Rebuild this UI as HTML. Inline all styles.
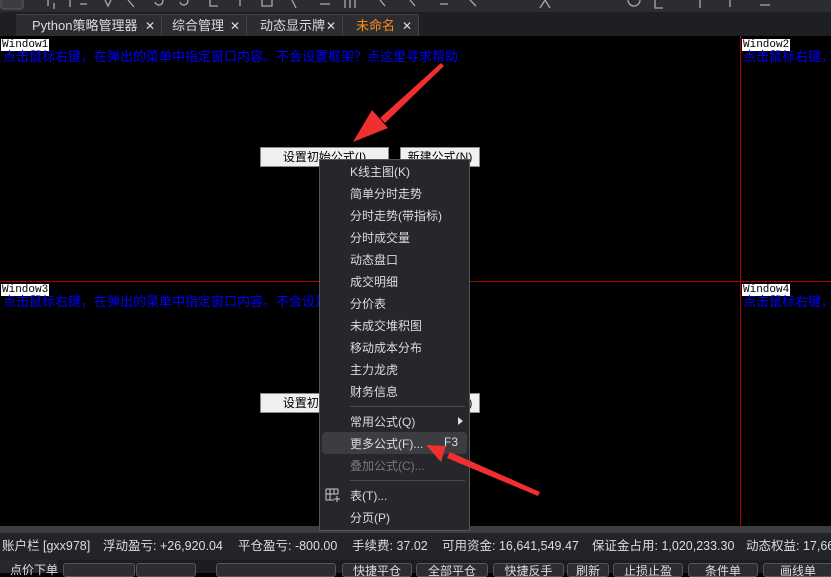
<!DOCTYPE html>
<html><head><meta charset="utf-8"><style>
*{margin:0;padding:0;box-sizing:border-box}
body{width:831px;height:573px;overflow:hidden;background:#000;font-family:"Liberation Sans","Noto Sans CJK SC",sans-serif;position:relative}
.abs{position:absolute}
.tb{left:0;top:0;width:831px;height:12px;background:#2b2d30}
.tabs{left:0;top:12px;width:831px;height:24px;background:#1e1f22}
.tab{position:absolute;top:14px;height:22px;background:#2b2d30;color:#dcdcdc;font-size:13px;line-height:22px;border-top:1px solid #444;border-right:1px solid #444}
.tab .x{position:absolute;right:6px;top:0;font-size:12px;color:#ddd}
.wl{background:#fff;color:#000;font-family:"Liberation Mono",monospace;font-size:11px;line-height:12px;padding:0 1px}
.blue{color:#0000ff;font-size:13px;line-height:14px;white-space:nowrap}
.btn{background:#f0f0f0;border:1px solid #888;color:#000;font-size:12px;line-height:18px;height:20px;text-align:center}
.menu{left:319px;top:159px;width:151px;height:372px;background:#25272b;border:1px solid #555;color:#dcdcdc;font-size:12px}
.mi{position:absolute;left:30px;white-space:nowrap}
.status{left:0;top:533px;width:831px;height:27px;background:#222427;color:#ddd;font-size:12.5px;line-height:27px;white-space:nowrap}
.bot{left:0;top:560px;width:831px;height:13px;background:#1c1d20}
.bb{position:absolute;top:3px;height:14px;background:#2b2d30;border:1px solid #555;border-radius:3px;color:#ddd;font-size:12px;line-height:14px;text-align:center;overflow:hidden}
</style></head><body>
<div class="abs tb"></div>
<svg class="abs" style="left:0;top:0" width="831" height="12"><g stroke="#aaa" fill="none" stroke-width="1.3">
<rect x="1" y="-5" width="22" height="14" rx="3" fill="#3a3c40" stroke="#555"/><path d="M48 0v6M54 3v6M70 0v7M80 4h7M105 0l3 6 3-6M128 0l6 7M155 0a4 4 0 1 1 0 2M180 0a4 4 0 1 1 0 2M210 0v6h8M240 -2v8M262 -4h10v10h-10zM292 0l4 8M320 4h10M345 0v8M350 0v8M355 0v8M380 0l5 6M410 0l5 6M440 4h8M470 0l6 6M505 0a5 5 0 0 1 10 0M540 8l5-8 5 8M628 0a6 6 0 1 0 12 0M655 0v8h8M700 0v8M720 -2h10v9M760 5h10"/></g></svg>
<div class="abs tabs"></div>
<div class="tab" style="left:16px;width:146px;padding-left:16px">Python策略管理器<span class="x">✕</span></div>
<div class="tab" style="left:162px;width:85px;padding-left:10px">综合管理<span class="x">✕</span></div>
<div class="tab" style="left:247px;width:96px;padding-left:13px">动态显示牌<span class="x">✕</span></div>
<div class="tab" style="left:343px;width:76px;padding-left:13px;color:#ff8c1a;background:#2b2d30">未命名<span class="x">✕</span></div>
<div class="abs" style="left:0;top:281px;width:831px;height:1px;background:#b00000"></div>
<div class="abs" style="left:740px;top:36px;width:1px;height:490px;background:#b00000"></div>
<div class="abs wl" style="left:1px;top:39px">Window1</div>
<div class="abs blue" style="left:3px;top:50px">点击鼠标右键，在弹出的菜单中指定窗口内容。不会设置框架？点这里寻求帮助</div>
<div class="abs wl" style="left:742px;top:39px">Window2</div>
<div class="abs blue" style="left:743px;top:50px">点击鼠标右键，</div>
<div class="abs wl" style="left:1px;top:284px">Window3</div>
<div class="abs blue" style="left:3px;top:295px">点击鼠标右键，在弹出的菜单中指定窗口内容。不会设置框架</div>
<div class="abs wl" style="left:742px;top:284px">Window4</div>
<div class="abs blue" style="left:743px;top:295px">点击鼠标右键，</div>
<div class="abs btn" style="left:260px;top:147px;width:129px">设置初始公式(I)</div>
<div class="abs btn" style="left:400px;top:147px;width:80px">新建公式(N)</div>
<div class="abs btn" style="left:260px;top:393px;width:129px">设置初始公式(I)</div>
<div class="abs btn" style="left:400px;top:393px;width:80px">新建公式(N)</div>
<div class="abs" style="left:0;top:526px;width:831px;height:7px;background:#3c3d40"></div>
<div class="abs menu">
<div class="mi" style="top:3px">K线主图(K)</div>
<div class="mi" style="top:25px">简单分时走势</div>
<div class="mi" style="top:47px">分时走势(带指标)</div>
<div class="mi" style="top:69px">分时成交量</div>
<div class="mi" style="top:91px">动态盘口</div>
<div class="mi" style="top:113px">成交明细</div>
<div class="mi" style="top:135px">分价表</div>
<div class="mi" style="top:157px">未成交堆积图</div>
<div class="mi" style="top:179px">移动成本分布</div>
<div class="mi" style="top:201px">主力龙虎</div>
<div class="mi" style="top:223px">财务信息</div>
<div style="position:absolute;left:30px;top:246px;width:115px;height:1px;background:#4a4c50"></div>
<div class="mi" style="top:253px">常用公式(Q)</div>
<div style="position:absolute;left:138px;top:257px;width:0;height:0;border-left:5px solid #ddd;border-top:4px solid transparent;border-bottom:4px solid transparent"></div>
<div style="position:absolute;left:2px;top:272px;width:145px;height:22px;background:#3b3d41;border-radius:4px"></div>
<div class="mi" style="top:275px">更多公式(F)...</div>
<div class="mi" style="top:275px;left:124px">F3</div>
<div class="mi" style="top:297px;color:#777">叠加公式(C)...</div>
<div style="position:absolute;left:30px;top:320px;width:115px;height:1px;background:#4a4c50"></div>
<svg style="position:absolute;left:5px;top:327px" width="16" height="16"><path d="M1 2h12M1 2v11h8M1 7h12M5 2v11M9 2v5M13 2v5M12 9v6M9 12h6" stroke="#ccc" fill="none"/></svg>
<div class="mi" style="top:327px">表(T)...</div>
<div class="mi" style="top:349px">分页(P)</div>
</div>
<svg class="abs" style="left:0;top:0" width="831" height="573"><g fill="#f03030">
<polygon points="441,63 380,118 385,123 444,66"/><polygon points="353,142 372,110 388,128"/>
<polygon points="540,492 450,452 447,458 538,496"/><polygon points="426,445 446,446 441,462"/>
</g></svg>
<div class="abs status">
<span style="position:absolute;left:2px">账户栏 [gxx978]</span>
<span style="position:absolute;left:103px">浮动盈亏: +26,920.04</span>
<span style="position:absolute;left:238px">平仓盈亏: -800.00</span>
<span style="position:absolute;left:352px">手续费: 37.02</span>
<span style="position:absolute;left:442px">可用资金: 16,641,549.47</span>
<span style="position:absolute;left:592px">保证金占用: 1,020,233.30</span>
<span style="position:absolute;left:746px">动态权益: 17,66</span>
</div>
<div class="abs bot">
<div style="position:absolute;left:0;top:0;width:58px;height:13px;background:#26282b"></div>
<div class="bb" style="left:10px;top:3px;border:none;background:none">点价下单</div>
<div class="bb" style="left:63px;width:72px"></div>
<div class="bb" style="left:136px;width:60px"></div>
<div class="bb" style="left:216px;width:120px"></div>
<div class="bb" style="left:342px;width:70px">快捷平仓</div>
<div class="bb" style="left:416px;width:72px">全部平仓</div>
<div class="bb" style="left:493px;width:71px">快捷反手</div>
<div class="bb" style="left:567px;width:42px">刷新</div>
<div class="bb" style="left:613px;width:70px">止损止盈</div>
<div class="bb" style="left:688px;width:70px">条件单</div>
<div class="bb" style="left:763px;width:70px">画线单</div>
</div>
</body></html>
